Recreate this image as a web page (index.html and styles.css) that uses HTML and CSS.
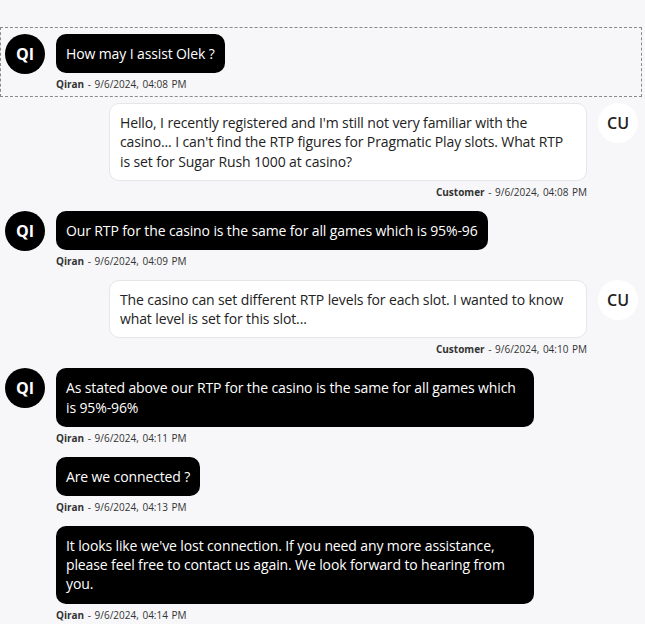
FILE: index.html
```html
<!DOCTYPE html>
<html>
<head>
    <title>Chat</title>
    <link rel="stylesheet" href="styles.css">
</head>
<body>
<div class="chat">
    <div class="msg bot focused">
        <div class="avatar">QI</div>
        <div class="body">
            <div class="bubble">How may I assist Olek ?</div>
            <div class="meta"><b>Qiran</b> - 9/6/2024, 04:08 PM</div>
        </div>
    </div>

    <div class="msg user">
        <div class="body">
            <div class="bubble">Hello, I recently registered and I'm still not very familiar with the casino... I can't find the RTP figures for Pragmatic Play slots. What RTP is set for Sugar Rush 1000 at casino?</div>
            <div class="meta"><b>Customer</b> - 9/6/2024, 04:08 PM</div>
        </div>
        <div class="avatar">CU</div>
    </div>

    <div class="msg bot">
        <div class="avatar">QI</div>
        <div class="body">
            <div class="bubble">Our RTP for the casino is the same for all games which is 95%-96</div>
            <div class="meta"><b>Qiran</b> - 9/6/2024, 04:09 PM</div>
        </div>
    </div>

    <div class="msg user">
        <div class="body">
            <div class="bubble">The casino can set different RTP levels for each slot. I wanted to know what level is set for this slot...</div>
            <div class="meta"><b>Customer</b> - 9/6/2024, 04:10 PM</div>
        </div>
        <div class="avatar">CU</div>
    </div>

    <div class="msg bot">
        <div class="avatar">QI</div>
        <div class="body">
            <div class="bubble">As stated above our RTP for the casino is the same for all games which is 95%-96%</div>
            <div class="meta"><b>Qiran</b> - 9/6/2024, 04:11 PM</div>
        </div>
    </div>

    <div class="msg bot">
        <div class="avatar empty"></div>
        <div class="body">
            <div class="bubble">Are we connected ?</div>
            <div class="meta"><b>Qiran</b> - 9/6/2024, 04:13 PM</div>
        </div>
    </div>

    <div class="msg bot">
        <div class="avatar empty"></div>
        <div class="body">
            <div class="bubble">It looks like we've lost connection. If you need any more assistance, please feel free to contact us again. We look forward to hearing from you.</div>
            <div class="meta"><b>Qiran</b> - 9/6/2024, 04:14 PM</div>
        </div>
    </div>
</div>
</body>
</html>
```

FILE: styles.css
```css
body {
    margin: 0;
    background-color: #f7f7f9;
    font-family: "Open Sans", "Noto Sans", sans-serif;
    color: #222;
}

.chat {
    padding: 27px 3px 0 0;
    display: flex;
    flex-direction: column;
}

.msg {
    display: flex;
    gap: 11px;
    align-items: flex-start;
    padding: 0 4px 0 5px;
    margin-bottom: 12px;
}

.msg.focused {
    border: 1px dashed #8a8a8a;
    padding: 6px 3px 5px 4px;
    margin-bottom: 6px;
}

.msg.user {
    justify-content: flex-end;
}

.avatar {
    width: 40px;
    height: 40px;
    border-radius: 50%;
    flex-shrink: 0;
    display: flex;
    align-items: center;
    justify-content: center;
    font-size: 16px;
    font-weight: 700;
}

.bot .avatar {
    background-color: #000;
    color: #fff;
}

.user .avatar {
    background-color: #fff;
    color: #222;
    font-weight: 600;
}

.avatar.empty {
    background-color: transparent !important;
}

.body {
    display: flex;
    flex-direction: column;
    max-width: 478px;
}

.user .body {
    align-items: flex-end;
}

.bubble {
    padding: 10px;
    border-radius: 10px;
    font-size: 14px;
    line-height: 19.2px;
    letter-spacing: -0.12px;
}

.bot .bubble {
    background-color: #000;
    color: #fff;
}

.user .bubble {
    background-color: #fff;
    border: 1px solid #e6e6ea;
    padding: 9px 10px;
}

.meta {
    margin-top: 5px;
    font-size: 10px;
    line-height: 13px;
    color: #333;
    word-spacing: 1px;
}

.meta b {
    font-weight: 700;
}
```
